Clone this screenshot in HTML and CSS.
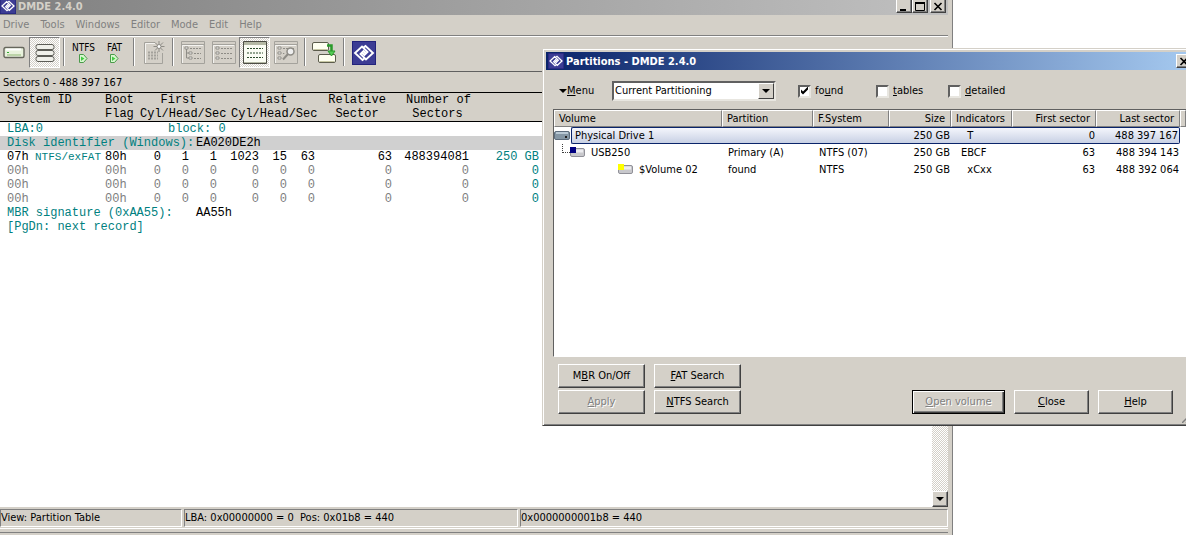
FILE: index.html
```html
<!DOCTYPE html>
<html lang="en">
<head>
  <meta charset="UTF-8" />
  <meta name="viewport" content="width=device-width, initial-scale=1.0"/>
  <title>DMDE 2.4.0</title>
  <link rel="stylesheet" href="styles.css">
</head>
<body>
  <!-- shared symbols -->
  <svg class="defs" width="0" height="0" aria-hidden="true">
    <symbol id="logo" viewBox="0 0 24 24">
      <rect width="24" height="24" fill="#23237c"/>
      <rect x="1" y="1" width="22" height="22" fill="#3c3c94"/>
      <path d="M13 17 10.500 19 3 12 10 5.500 15.500 11 12.500 14 10 11.500M11 7 13.500 5 21 12 14 18.500 8.500 13 11.500 10 14 12.500" fill="none" stroke="#fff" stroke-width="1.900"/>
    </symbol>
    <symbol id="volume" viewBox="0 0 15 9">
      <rect x=".5" y=".5" width="14" height="8" rx="1.500" fill="#c8c8cc" stroke="#909098"/>
      <path d="M2 1.500h11v3H2z" fill="#ececf0"/>
    </symbol>
    <symbol id="tree" viewBox="0 0 24 23">
      <path d="M.5.5h23v22H.5zM1 3.500h22" fill="none" stroke="#a4a29c"/>
      <path d="M1.500 22V4.500H22" fill="none" stroke="#f4f3f0"/>
      <path d="M4 6h3v2H4zM8 11h3v2H8zM8 16h3v2H8z" fill="#fff" stroke="#8e8c86"/>
      <path d="M5.500 8v9M5.500 12H8M5.500 17H8" stroke="#8e8c86" fill="none"/>
      <path d="M9 7.500h11M13 12.500h7M13 17.500h7" stroke="#8e8c86" stroke-dasharray="2 1"/>
    </symbol>
    <symbol id="list" viewBox="0 0 24 23">
      <path d="M.5.5h23v22H.5zM1 3.500h22" fill="none" stroke="#a4a29c"/>
      <path d="M1.500 22V4.500H22" fill="none" stroke="#f4f3f0"/>
      <path d="M4 6h3v2H4zM4 11h3v2H4zM4 16h3v2H4z" fill="#fff" stroke="#8e8c86"/>
      <path d="M9 7.500h11M9 12.500h11M9 17.500h11" stroke="#8e8c86" stroke-dasharray="2 1"/>
    </symbol>
  </svg>

  <div class="desktop">
    <main class="window main-window">
      <header class="titlebar">
        <svg class="title-icon"><use href="#logo"/></svg>
        <h1>DMDE 2.4.0</h1>
        <button class="sys-btn" type="button" aria-label="Minimize"><svg width="10" height="9"><path d="M1 7h6v2H1z"/></svg></button>
        <button class="sys-btn" type="button" aria-label="Maximize"><svg width="10" height="9"><path d="M.5 1h9v7.500h-9z" fill="none" stroke="#000"/><path d="M0 0h10v2H0z"/></svg></button>
        <button class="sys-btn sys-close" type="button" aria-label="Close"><svg width="10" height="9"><path d="m1.500 1 7 7m0-7-7 7" stroke="#000" stroke-width="1.600"/></svg></button>
      </header>

      <nav class="menubar">
        <a href="#">Drive</a>
        <a href="#">Tools</a>
        <a href="#">Windows</a>
        <a href="#">Editor</a>
        <a href="#">Mode</a>
        <a href="#">Edit</a>
        <a href="#">Help</a>
      </nav>

      <div class="toolbar">
        <button class="tool" type="button" aria-label="Select drive">
          <svg width="22" height="13" viewBox="0 0 22 13"><rect x="1" y="1.500" width="20" height="10" rx="1.500" fill="#e8f2dc" stroke="#66665c" stroke-width="1.400"/><path d="M3 3.500h15" stroke="#fff" stroke-width="2"/><path d="M4 6.500h2" stroke="#3a3"/><path d="M4 9h14" stroke="#bcd4a8" stroke-width="2"/></svg>
        </button>
        <button class="tool pressed" type="button" aria-label="Partitions">
          <svg width="20" height="18" viewBox="0 0 20 18"><g fill="#f0f0ea" stroke="#5c5c56"><rect x="1" y=".5" width="18" height="5" rx="2"/><rect x="1" y="6.500" width="18" height="5" rx="2"/><rect x="1" y="12.500" width="18" height="5" rx="2"/></g></svg>
        </button>
        <i class="sep"></i>
        <button class="tool labelled" type="button">NTFS
          <svg width="9" height="9"><path d="M.5.5h4l3.500 4-3.500 4h-4z" fill="#d8f8d0" stroke="#4a9a4a"/><path d="M2 2.500 5.500 4.500 2 7z" fill="#4c4"/></svg>
        </button>
        <button class="tool labelled" type="button">FAT
          <svg width="9" height="9"><path d="M.5.5h4l3.500 4-3.500 4h-4z" fill="#d8f8d0" stroke="#4a9a4a"/><path d="M2 2.500 5.500 4.500 2 7z" fill="#4c4"/></svg>
        </button>
        <i class="sep"></i>
        <button class="tool" type="button" aria-label="New" disabled>
          <svg width="22" height="24" viewBox="0 0 22 24"><path d="M12 1.500H1.500v21h18V12" fill="none" stroke="#a4a29c"/><path d="M12 2.500H2.500V22" fill="none" stroke="#f4f3f0"/><path d="M5 11.500h10M5 14.500h10M5 17.500h10" stroke="#a4a29c" stroke-width="2" stroke-dasharray="2 1"/><path d="M16 0v11M10.500 5.500h11M12 1.500l8 8M20 1.500l-8 8" stroke="#8e8c86"/><circle cx="16" cy="5.500" r="2" fill="#fff" stroke="#8e8c86"/></svg>
        </button>
        <i class="sep"></i>
        <button class="tool" type="button" aria-label="Tree" disabled><svg width="24" height="23"><use href="#tree"/></svg></button>
        <button class="tool" type="button" aria-label="File list" disabled><svg width="24" height="23"><use href="#list"/></svg></button>
        <button class="tool pressed" type="button" aria-label="Editor view">
          <svg width="24" height="23" viewBox="0 0 24 23"><path d="M.5.5h23v22H.5z" fill="#fbfdf4" stroke="#4c4c44"/><path d="M1 1h22v3H1z" fill="#b4b8a4"/><path d="M1 21.500h22" stroke="#b4b8a4"/><path d="M4 7.500h16M4 12h16M4 16.500h16" stroke="#2c4c2c" stroke-dasharray="2 1"/></svg>
        </button>
        <button class="tool" type="button" aria-label="Search" disabled>
          <svg width="24" height="23"><use href="#list"/><path d="M11 9h10v10H9z" fill="#d4d0c8"/><circle cx="16.500" cy="10.500" r="3.500" fill="#eee" stroke="#8e8c86" stroke-width="1.500"/><path d="m14 13-5 5.500" stroke="#8e8c86" stroke-width="2"/></svg>
        </button>
        <i class="sep"></i>
        <button class="tool" type="button" aria-label="Copy sectors">
          <svg width="25" height="23" viewBox="0 0 25 23"><g fill="#fffff0" stroke="#5c5c4c"><rect x=".5" y="1.500" width="16" height="8" rx="1.500"/><rect x="6.500" y="13.500" width="17" height="8" rx="1.500"/></g><path d="M2 8.500h13M8 20.500h14" stroke="#c8c8a4"/><path d="M15 4.500h4.500V11" fill="none" stroke="#2a9a2a" stroke-width="2.500"/><path d="M16 10h7l-3.500 5z" fill="#5c5" stroke="#2a9a2a"/></svg>
        </button>
        <i class="sep"></i>
        <button class="tool" type="button" aria-label="About"><svg width="24" height="24"><use href="#logo"/></svg></button>
      </div>

      <div class="caption">Sectors 0 - 488 397 167</div>

      <section class="editor">
        <table class="sectors">
          <colgroup>
            <col class="c-id"><col class="c-flag">
            <col class="c-cyl"><col class="c-head"><col class="c-sec">
            <col class="c-cyl2"><col class="c-head"><col class="c-sec">
            <col class="c-rel"><col class="c-num"><col class="c-size"><col>
          </colgroup>
          <thead>
            <tr><th class="left">System ID</th><th class="left">Boot</th><th colspan="3">First</th><th colspan="3" class="num">Last</th><th class="rel">Relative</th><th class="num">Number of</th><th></th><th></th></tr>
            <tr><th></th><th class="left">Flag</th><th colspan="3" class="left">Cyl/Head/Sec</th><th colspan="3" class="chs2">Cyl/Head/Sec</th><th class="rel">Sector</th><th class="num">Sectors</th><th></th><th></th></tr>
          </thead>
          <tbody>
            <tr><td colspan="12" class="left teal"><span class="lba">LBA:0</span>block: 0</td></tr>
            <tr class="current"><td colspan="12" class="left teal"><span class="field">Disk identifier (Windows):</span><b>EA020DE2h</b></td></tr>
            <tr><td class="left"><span class="code">07h</span><span class="fs teal">NTFS/exFAT</span></td><td class="left">80h</td><td>0</td><td>1</td><td>1</td><td>1023</td><td>15</td><td>63</td><td>63</td><td>488394081</td><td class="teal">250 GB</td><td></td></tr>
            <tr class="empty"><td class="left">00h</td><td class="left">00h</td><td>0</td><td>0</td><td>0</td><td>0</td><td>0</td><td>0</td><td>0</td><td>0</td><td class="teal">0</td><td></td></tr>
            <tr class="empty"><td class="left">00h</td><td class="left">00h</td><td>0</td><td>0</td><td>0</td><td>0</td><td>0</td><td>0</td><td>0</td><td>0</td><td class="teal">0</td><td></td></tr>
            <tr class="empty"><td class="left">00h</td><td class="left">00h</td><td>0</td><td>0</td><td>0</td><td>0</td><td>0</td><td>0</td><td>0</td><td>0</td><td class="teal">0</td><td></td></tr>
            <tr><td colspan="12" class="left teal"><span class="field">MBR signature (0xAA55):</span><b>AA55h</b></td></tr>
            <tr><td colspan="12" class="left teal">[PgDn: next record]</td></tr>
          </tbody>
        </table>
        <div class="scrollbar"><button class="scroll-btn" type="button" aria-label="Scroll down"><i class="arrow"></i></button></div>
      </section>

      <footer class="statusbar">
        <span class="pane pane-view">View: Partition Table</span>
        <span class="pane pane-pos">LBA: 0x00000000 = 0&nbsp; Pos: 0x01b8 = 440</span>
        <span class="pane pane-abs">0x0000000001b8 = 440</span>
      </footer>
      <div class="bottom-edge"></div>
    </main>

    <section class="window dialog">
      <header class="titlebar">
        <svg class="title-icon"><use href="#logo"/></svg>
        <h2>Partitions - DMDE 2.4.0</h2>
        <button class="sys-btn" type="button" aria-label="Close"><svg width="10" height="9"><path d="m1.500 1 7 7m0-7-7 7" stroke="#000" stroke-width="1.600"/></svg></button>
      </header>

      <form class="options">
        <button class="menu-btn" type="button"><i class="arrow"></i><span><u>M</u>enu</span></button>
        <div class="combo">
          <select aria-label="Partitioning"><option>Current Partitioning</option></select>
          <span class="combo-btn"><i class="arrow"></i></span>
        </div>
        <label class="check" for="found"><input type="checkbox" id="found" checked><span>fo<u>u</u>nd</span></label>
        <label class="check" for="tables"><input type="checkbox" id="tables"><span><u>t</u>ables</span></label>
        <label class="check" for="detailed"><input type="checkbox" id="detailed"><span><u>d</u>etailed</span></label>
      </form>

      <div class="list">
        <table class="volumes">
          <colgroup>
            <col class="v-volume"><col class="v-part"><col class="v-fs"><col class="v-size">
            <col class="v-ind"><col class="v-sector"><col class="v-sector"><col>
          </colgroup>
          <thead>
            <tr><th>Volume</th><th>Partition</th><th>F.System</th><th class="right">Size</th><th>Indicators</th><th class="right">First sector</th><th class="right">Last sector</th><th></th></tr>
          </thead>
          <tbody>
            <tr class="selected">
              <td><div class="node"><svg class="disk" width="16" height="9" viewBox="0 0 16 9"><rect x=".5" y=".5" width="15" height="8" rx="1.500" fill="#8496a4" stroke="#5c6c7c"/><path d="M2 2h12" stroke="#b8c8d4" stroke-width="2"/><path d="M11 6h2" stroke="#222" stroke-width="2"/></svg><span class="name">Physical Drive 1</span></div></td>
              <td></td><td></td><td class="right">250 GB</td><td class="ind">&nbsp; T</td><td class="right">0</td><td class="right last">488 397 167</td><td></td>
            </tr>
            <tr>
              <td><div class="node level1"><i class="branch"></i><span class="vol primary"><svg width="15" height="9"><use href="#volume"/></svg></span>USB250</div></td>
              <td>Primary (A)</td><td>NTFS (07)</td><td class="right">250 GB</td><td class="ind">EBCF</td><td class="right">63</td><td class="right last">488 394 143</td><td></td>
            </tr>
            <tr>
              <td><div class="node level2"><span class="vol found"><svg width="15" height="9"><use href="#volume"/></svg></span>$Volume 02</div></td>
              <td>found</td><td>NTFS</td><td class="right">250 GB</td><td class="ind">&nbsp; xCxx</td><td class="right">63</td><td class="right last">488 392 064</td><td></td>
            </tr>
          </tbody>
        </table>
      </div>

      <div class="actions">
        <div class="grid">
          <button class="btn" type="button"><span>M<u>B</u>R On/Off</span></button>
          <button class="btn" type="button"><span><u>F</u>AT Search</span></button>
          <button class="btn" type="button" disabled><span><u>A</u>pply</span></button>
          <button class="btn" type="button"><span><u>N</u>TFS Search</span></button>
        </div>
        <div class="dialog-buttons">
          <button class="btn btn-default" type="button" disabled><span><u>O</u>pen volume</span></button>
          <button class="btn btn-small" type="button"><span><u>C</u>lose</span></button>
          <button class="btn btn-small" type="button"><span><u>H</u>elp</span></button>
        </div>
      </div>
      <svg class="grip" width="13" height="13"><path d="M0 13 13 0M4 13l9-9M8 13l5-5" stroke="#808080" stroke-width="1.500"/></svg>
    </section>
  </div>
</body>
</html>
```

FILE: styles.css
```css
* {
  box-sizing: border-box;
}
body {
  margin: 0;
  background: #fff;
  color: #000;
  font-family: 'DejaVu Sans Condensed', 'DejaVu Sans', sans-serif;
  font-size: 11px;
  line-height: 14px;
}
button, select, input {
  font: inherit;
  color: inherit;
  margin: 0;
  padding: 0;
}
svg {
  display: block;
  flex: none;
}
.defs {
  position: absolute;
}
.desktop {
  position: relative;
  height: 100vh;
  overflow: hidden;
}
.window {
  position: absolute;
  display: flex;
  flex-direction: column;
  background: #d4d0c8;
}
.main-window {
  left: -2px;
  right: 233px;
  top: -3px;
  bottom: 0;
  padding-right: 4px;
  border-right: 1px solid #808080;
}

/* title bars */
.titlebar {
  display: flex;
  align-items: center;
  height: 18px;
  padding-right: 2px;
  background: linear-gradient(to right, #808080, #c0c0c0);
  color: #d4d0c8;
}
.titlebar h1, .titlebar h2 {
  flex: 1;
  margin: 0;
  padding-top: 1px;
  font-size: 11px;
  font-weight: bold;
}
.title-icon {
  width: 16px;
  height: 16px;
  margin: 0 2px;
}
.sys-btn {
  display: flex;
  align-items: center;
  justify-content: center;
  width: 16px;
  height: 14px;
  background: #d4d0c8;
  border: 1px solid;
  border-color: #fff #404040 #404040 #fff;
  box-shadow: inset -1px -1px #808080;
}
.sys-close {
  margin-left: 2px;
}

/* menu and toolbar */
.menubar {
  display: flex;
  align-items: center;
  gap: 11px;
  height: 20px;
  padding-left: 5px;
}
.menubar a {
  color: #808080;
  text-decoration: none;
}
.toolbar {
  display: flex;
  height: 37px;
  padding-top: 1px;
  border-top: 1px solid #808080;
  border-bottom: 1px solid #606060;
  box-shadow: inset 0 1px #fff;
}
.tool {
  display: flex;
  align-items: center;
  justify-content: center;
  width: 31px;
  height: 31px;
  background: none;
  border: 1px solid transparent;
}
.tool.pressed {
  background: repeating-conic-gradient(#fff 0 25%, #d4d0c8 0 50%) 0 0 / 2px 2px;
  border-color: #808080 #fff #fff #808080;
}
.tool.labelled {
  flex-direction: column;
  font-size: 10px;
  line-height: 12px;
}
.sep {
  width: 8px;
  height: 28px;
  margin-top: 1px;
  border-left: 3px solid transparent;
  background: linear-gradient(to right, #808080 1px, #fff 1px, #fff 2px, transparent 2px) no-repeat padding-box;
}
.caption {
  height: 20px;
  padding: 4px 5px;
}

/* sector editor */
.editor {
  flex: 1;
  display: flex;
  min-height: 0;
  background: #fff;
  font-family: 'Liberation Mono', monospace;
  font-size: 12px;
  border-top: 1px solid #000;
}
.sectors {
  flex: 1;
  width: 100%;
  height: max-content;
  table-layout: fixed;
  border-collapse: collapse;
  line-height: 14px;
}
.sectors th, .sectors td {
  height: 14px;
  padding: 0;
  font-weight: normal;
  text-align: right;
  white-space: nowrap;
}
.sectors th {
  background: #d4d0c8;
  text-align: center;
}
.sectors thead tr:last-child th {
  border-bottom: 1px solid #000;
}
.sectors .left {
  text-align: left;
}
.sectors .left:first-child {
  padding-left: 9px;
}
.sectors th.chs2 {
  padding-left: 14px;
  text-align: left;
}
.sectors th.rel {
  padding-left: 7px;
}
.sectors th.num {
  padding-left: 14px;
}
.sectors b {
  color: #000;
  font-weight: normal;
}
.c-id { width: 107px; }
.c-flag { width: 35px; }
.c-cyl { width: 21px; }
.c-head { width: 28px; }
.c-sec { width: 28px; }
.c-cyl2 { width: 42px; }
.c-rel { width: 77px; }
.c-num { width: 77px; }
.c-size { width: 70px; }
.teal {
  color: #008080;
}
.current {
  background: #d0d0d0;
}
.empty td:not(.teal) {
  color: #808080;
}
.code {
  display: inline-block;
  width: 28px;
}
.fs {
  font-size: 11px;
}
.lba {
  display: inline-block;
  width: 161px;
}
.field {
  display: inline-block;
  width: 189px;
}
.scrollbar {
  display: flex;
  align-items: flex-end;
  width: 16px;
  background: repeating-conic-gradient(#fff 0 25%, #d4d0c8 0 50%) 0 0 / 2px 2px;
}
.scroll-btn {
  display: flex;
  align-items: center;
  justify-content: center;
  width: 16px;
  height: 16px;
  background: #d4d0c8;
  border: 1px solid;
  border-color: #fff #404040 #404040 #fff;
  box-shadow: inset -1px -1px #808080;
}
.arrow {
  border: 4px solid transparent;
  border-top-color: #000;
  border-bottom: 0;
}

/* status bar */
.statusbar {
  display: flex;
  gap: 2px;
  height: 21px;
  padding: 2px 0 1px 2px;
}
.pane {
  padding: 1px 0;
  border: 1px solid;
  border-color: #808080 #fff #fff #808080;
}
.pane-view { width: 182px; }
.pane-pos { width: 334px; }
.pane-abs { flex: 1; }
.bottom-edge {
  height: 7px;
  padding-top: 3px;
  border-top: 1px solid #fff;
}
.bottom-edge::after {
  content: "";
  display: block;
  border-top: 1px solid #808080;
}

/* partitions dialog */
.dialog {
  left: 542px;
  right: -12px;
  top: 48px;
  padding: 2px;
  border: 1px solid;
  border-color: #d4d0c8 #404040 #404040 #d4d0c8;
  box-shadow: inset 1px 1px #fff, inset -1px -1px #808080;
}
.dialog .titlebar {
  margin: 1px;
  background: linear-gradient(to right, #0a246a, #a6caf0);
  color: #fff;
}
.options {
  display: flex;
  align-items: center;
  height: 38px;
  padding: 2px 0 0 14px;
}
.menu-btn {
  display: flex;
  align-items: center;
  width: 53px;
  background: none;
  border: 0;
}
.combo {
  position: relative;
  width: 164px;
  margin-right: 22px;
}
.combo select {
  display: block;
  width: 100%;
  height: 20px;
  padding-left: 1px;
  appearance: none;
  background: #fff;
  border: 2px solid;
  border-color: #606060 #e8e6e0 #e8e6e0 #606060;
  border-radius: 0;
}
.combo-btn {
  position: absolute;
  top: 2px;
  right: 2px;
  bottom: 2px;
  width: 16px;
  display: flex;
  align-items: center;
  justify-content: center;
  background: #d4d0c8;
  border: 1px solid;
  border-color: #fff #404040 #404040 #fff;
  pointer-events: none;
}
.check {
  display: flex;
  align-items: center;
  gap: 4px;
  width: 78px;
}
.check:last-child {
  margin-left: -6px;
}
.check input {
  display: flex;
  width: 13px;
  height: 13px;
  appearance: none;
  background: #fff;
  border: 2px solid;
  border-color: #606060 #e8e6e0 #e8e6e0 #606060;
}
.check input:checked::after {
  content: "";
  width: 9px;
  height: 9px;
  background: #000;
  clip-path: polygon(1px 3px, 3px 5px, 8px 0, 8px 3px, 3px 8px, 1px 6px);
}
.list {
  height: 248px;
  margin: 0 8px;
  background: #fff;
  border: 1px solid;
  border-color: #606060 #fff #fff #606060;
}
.volumes {
  width: 100%;
  table-layout: fixed;
  border-collapse: separate;
  border-spacing: 0;
}
.volumes th, .volumes td {
  height: 17px;
  padding: 0 0 0 6px;
  font-weight: normal;
  text-align: left;
  white-space: nowrap;
  line-height: 15px;
}
.volumes th {
  padding-left: 4px;
  background: #d4d0c8;
  border: 1px solid;
  border-color: #fff #808080 #808080 #fff;
  line-height: 14px;
}
.volumes .right {
  padding: 0 1px 0 0;
  text-align: right;
}
.volumes th.right {
  padding-right: 5px;
}
.volumes td:first-child {
  padding: 0;
}
.volumes td.ind {
  padding-left: 10px;
}
.v-volume { width: 168px; }
.v-part { width: 91px; }
.v-fs { width: 76px; }
.v-size { width: 62px; }
.v-ind { width: 61px; }
.v-sector { width: 84px; }
.node {
  display: flex;
  align-items: center;
  height: 17px;
}
.node .disk {
  margin-right: 1px;
}
.selected td:not(:first-child):not(:last-child), .selected .name {
  background: linear-gradient(#f4f6fc, #c8d0e4);
  border: 1px solid #0a246a;
  border-width: 1px 0;
}
.selected .name {
  flex: 1;
  height: 17px;
  padding-left: 3px;
  border-left-width: 1px;
  border-radius: 2px 0 0 2px;
}
.selected td.last:not(:first-child) {
  border-right-width: 1px;
  border-radius: 0 2px 2px 0;
}
.level1 {
  padding-left: 8px;
}
.level2 {
  padding-left: 64px;
}
.branch {
  width: 8px;
  height: 9px;
  margin-bottom: 8px;
  border-left: 1px dotted #404040;
  border-bottom: 1px dotted #404040;
}
.vol {
  position: relative;
  margin-right: 6px;
}
.vol::before {
  content: "";
  position: absolute;
  left: 0;
  top: -1px;
  width: 6px;
  height: 6px;
  background: #000080;
}
.vol.found::before {
  background: #ffff00;
}

/* dialog buttons */
.actions {
  display: flex;
  justify-content: space-between;
  align-items: flex-end;
  padding: 7px 22px 9px 13px;
}
.grid {
  display: grid;
  grid-template-columns: 87px 87px;
  gap: 2px 9px;
}
.dialog-buttons {
  display: flex;
  gap: 9px;
}
.btn {
  height: 24px;
  background: #d4d0c8;
  border: 1px solid;
  border-color: #fff #404040 #404040 #fff;
  box-shadow: inset -1px -1px #808080;
}
.btn:disabled {
  color: #808080;
  text-shadow: 1px 1px #fff;
}
.btn-default {
  width: 93px;
  border-color: #000;
  box-shadow: inset 1px 1px #fff, inset -1px -1px #404040, inset -2px -2px #808080;
}
.btn-small {
  width: 75px;
}
.grip {
  position: absolute;
  right: 2px;
  bottom: 2px;
}
```
